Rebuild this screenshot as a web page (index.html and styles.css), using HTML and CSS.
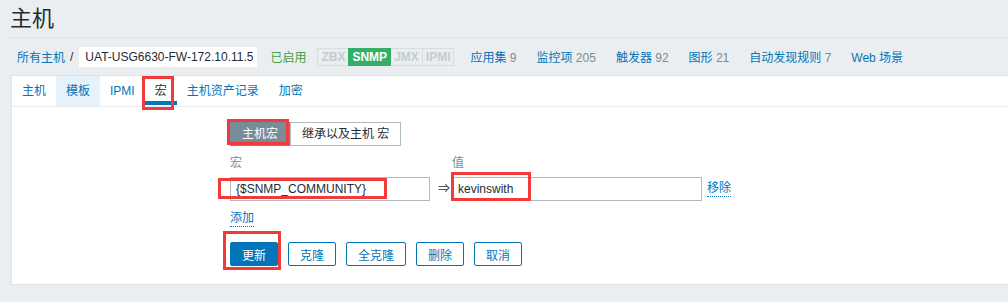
FILE: index.html
```html
<!DOCTYPE html>
<html lang="zh-CN">
<head>
    <meta charset="UTF-8">
    <title>主机</title>
    <link rel="stylesheet" href="styles.css">
</head>
<body>
    <header class="page-header">
        <h1>主机</h1>
    </header>

    <nav class="host-nav">
        <a class="crumb" href="#">所有主机</a>
        <span class="sep">/</span>
        <span class="host-name">UAT-USG6630-FW-172.10.11.5</span>
        <span class="status-on">已启用</span>
        <span class="avail">
            <span class="av off">ZBX</span><span class="av on">SNMP</span><span class="av off">JMX</span><span class="av off">IPMI</span>
        </span>
        <a class="nav-link" href="#">应用集 <span class="num">9</span></a>
        <a class="nav-link" href="#">监控项 <span class="num">205</span></a>
        <a class="nav-link" href="#">触发器 <span class="num">92</span></a>
        <a class="nav-link" href="#">图形 <span class="num">21</span></a>
        <a class="nav-link" href="#">自动发现规则 <span class="num">7</span></a>
        <a class="nav-link" href="#">Web 场景</a>
    </nav>

    <div class="panel">
        <ul class="tabs">
            <li class="tab">主机</li>
            <li class="tab hover">模板</li>
            <li class="tab">IPMI</li>
            <li class="tab active">宏<span class="mark mark-tab"></span></li>
            <li class="tab">主机资产记录</li>
            <li class="tab">加密</li>
        </ul>

        <div class="form">
            <div class="radio-group">
                <span class="radio selected">主机宏<span class="mark mark-radio"></span></span>
                <span class="radio">继承以及主机 宏</span>
            </div>

            <div class="macro-table">
                <div class="col-label">宏</div>
                <div></div>
                <div class="col-label">值</div>
                <div></div>

                <div class="field macro-field">
                    <input class="input macro-input" type="text" value="{$SNMP_COMMUNITY}">
                    <span class="mark mark-macro"></span>
                </div>
                <div class="arrow">⇒</div>
                <div class="field value-field">
                    <input class="input value-input" type="text" value="kevinswith">
                    <span class="mark mark-value"></span>
                </div>
                <div><a class="link-dotted" href="#">移除</a></div>
            </div>

            <div class="add-row"><a class="link-dotted" href="#">添加</a></div>

            <div class="buttons">
                <button class="btn primary">更新<span class="mark mark-update"></span></button>
                <button class="btn">克隆</button>
                <button class="btn">全克隆</button>
                <button class="btn">删除</button>
                <button class="btn">取消</button>
            </div>
        </div>
    </div>
</body>
</html>
```

FILE: styles.css
```css
body {
    margin: 0;
    background-color: #ebeef0;
    color: #1f2c33;
    font-family: "Liberation Sans", Arial, "Noto Sans CJK SC", sans-serif;
    font-size: 12px;
    overflow: hidden;
}
a {
    color: #0275b8;
    text-decoration: none;
}
.page-header {
    margin-left: 10px;
    height: 37px;
    border-bottom: 1px solid #dde2e5;
}
.page-header h1 {
    margin: 0;
    font-size: 22px;
    font-weight: normal;
    line-height: 38px;
}
.host-nav {
    display: flex;
    align-items: center;
    height: 37px;
    padding-left: 17px;
    white-space: nowrap;
}
.sep {
    margin: 0 6px 0 5px;
}
.host-name {
    background-color: #fff;
    height: 20px;
    line-height: 20px;
    padding: 0 4px 0 6px;
    margin-right: 13px;
}
.status-on {
    color: #429e47;
    margin-right: 11px;
}
.avail {
    display: flex;
    margin-right: 17px;
}
.av {
    font-weight: bold;
    font-size: 12px;
    height: 16px;
    line-height: 16px;
    padding: 0 3px;
    border: 1px solid #d5dde1;
    margin-right: -1px;
}
.av.off {
    color: #c4ccd0;
}
.av.on {
    background-color: #34af67;
    border-color: #34af67;
    color: #fff;
    position: relative;
}
.nav-link {
    margin-right: 20px;
}
.num {
    color: #768d99;
}
.panel {
    margin-left: 11px;
    background-color: #fff;
    border: 1px solid #dfe4e7;
    border-right: none;
}
.tabs {
    display: flex;
    list-style: none;
    margin: 0;
    padding: 0;
    border-bottom: 1px solid #ebeef0;
}
.tab {
    position: relative;
    height: 30px;
    line-height: 30px;
    padding: 0 10px;
    color: #0275b8;
}
.tab.hover {
    background-color: #e5f1fb;
}
.tab.active {
    color: #1f2c33;
    box-shadow: inset 0 -4px 0 #0275b8;
    height: 29px;
}
.form {
    padding: 15px 0 18px 218px;
}
.radio-group {
    display: flex;
}
.radio {
    position: relative;
    height: 22px;
    line-height: 22px;
    padding: 0 11px;
    border: 1px solid #acbbc2;
}
.radio.selected {
    background-color: #768d99;
    border-color: #768d99;
    color: #fff;
}
.macro-table {
    display: grid;
    grid-template-columns: 200px 22px 250px auto;
    row-gap: 5px;
    margin-top: 8px;
}
.col-label {
    color: #768d99;
    line-height: 18px;
}
.field {
    position: relative;
}
.input {
    box-sizing: border-box;
    display: block;
    width: 100%;
    height: 24px;
    margin: 0;
    padding: 0 5px;
    border: 1px solid #acbbc2;
    font-family: inherit;
    font-size: 12px;
    color: #1f2c33;
    outline: none;
}
.arrow {
    line-height: 24px;
    padding-left: 8px;
}
.link-dotted {
    display: inline-block;
    line-height: 15px;
    border-bottom: 1px dotted #0275b8;
}
.macro-table .link-dotted {
    margin: 4px 0 0 5px;
}
.add-row {
    margin: 10px 0 15px;
}
.buttons {
    display: flex;
    gap: 10px;
}
.btn {
    position: relative;
    height: 24px;
    padding: 0 11px;
    border: 1px solid #0275b8;
    border-radius: 2px;
    background-color: #fff;
    color: #0275b8;
    font-family: inherit;
    font-size: 12px;
}
.btn.primary {
    background-color: #0275b8;
    color: #fff;
}

/* red annotation frames */
.mark {
    position: absolute;
    border: 3px solid #f23a3a;
    box-sizing: border-box;
    pointer-events: none;
}
.mark-tab {
    left: -3px;
    top: 0;
    width: 32px;
    height: 34px;
}
.mark-radio {
    left: -4px;
    top: -4px;
    width: 62px;
    height: 26px;
}
.mark-macro {
    left: -12px;
    top: 1px;
    width: 169px;
    height: 21px;
}
.mark-value {
    left: -1px;
    top: -5px;
    width: 80px;
    height: 29px;
}
.mark-update {
    left: -8px;
    top: -12px;
    width: 58px;
    height: 39px;
}
```
